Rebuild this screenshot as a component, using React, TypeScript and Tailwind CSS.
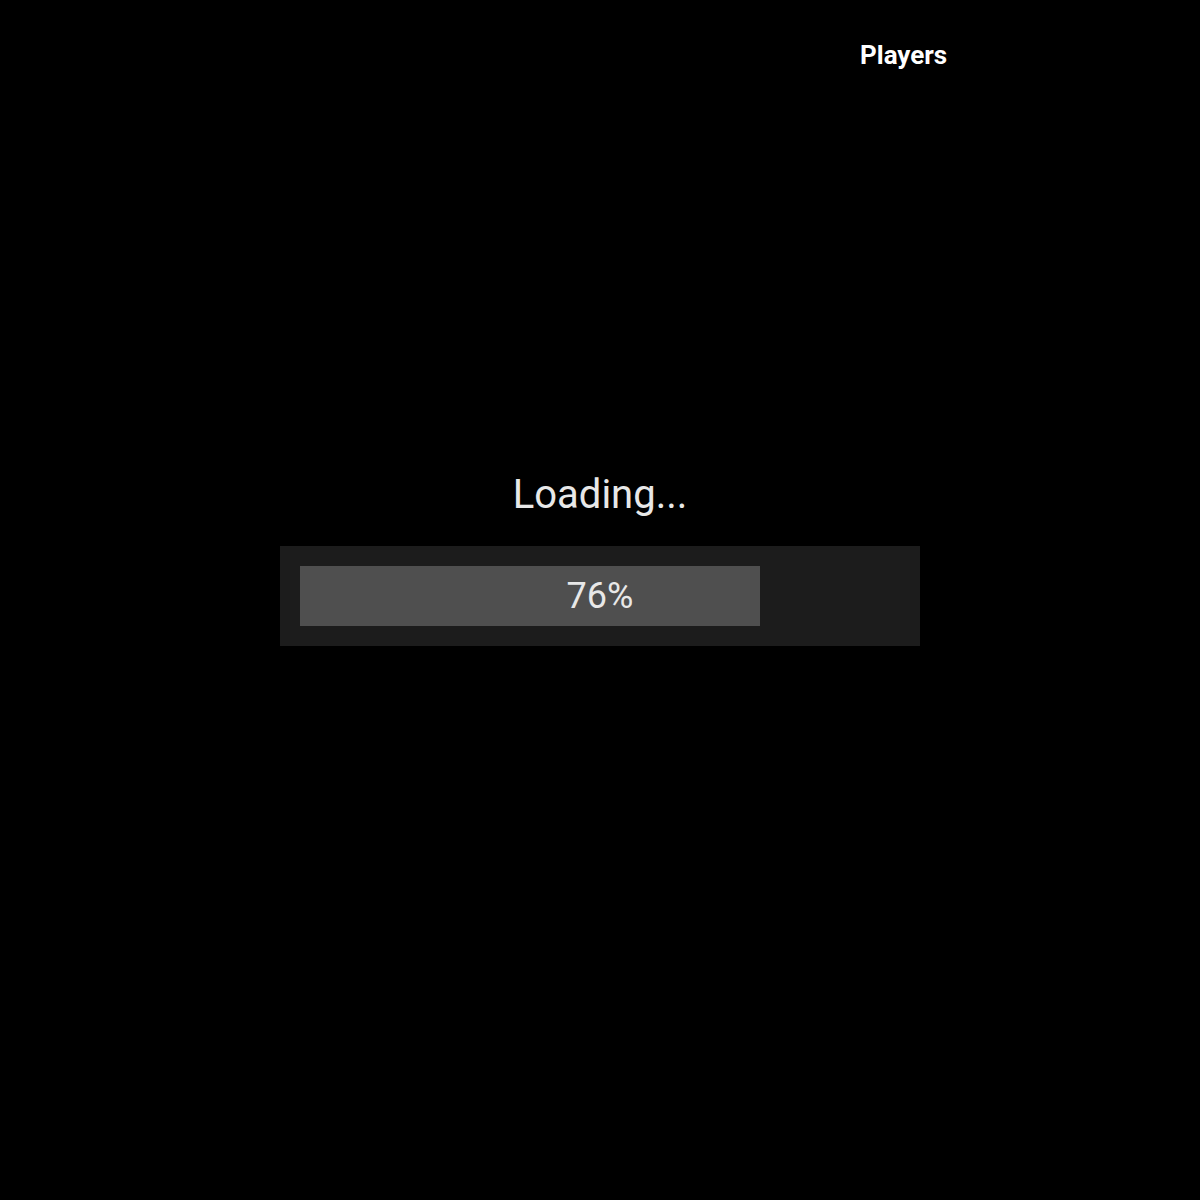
export default function App() {
  const pct = 76;
  return (
    <div className="w-[1200px] h-[1200px] bg-black flex flex-col" style={{ fontFamily: "Roboto, 'Noto Sans', sans-serif" }}>
      <div className="pt-[40px] pl-[860px] h-[70px] text-[26px] leading-[30px] font-bold text-white">
        Players
      </div>
      <div className="mt-[401px] flex flex-col items-center">
        <div className="text-[40px] leading-[48px] text-[#e8e8e8]">Loading...</div>
        <div className="mt-[27px] w-[640px] h-[100px] bg-[#1c1c1c] p-[20px] relative">
          <div className="h-[60px] w-[460px] bg-[#4f4f4f]" data-pct={pct} />
          <div className="absolute inset-0 flex items-center justify-center text-[36px] text-[#e8e8e8]">{pct}%</div>
        </div>
      </div>
    </div>
  );
}
